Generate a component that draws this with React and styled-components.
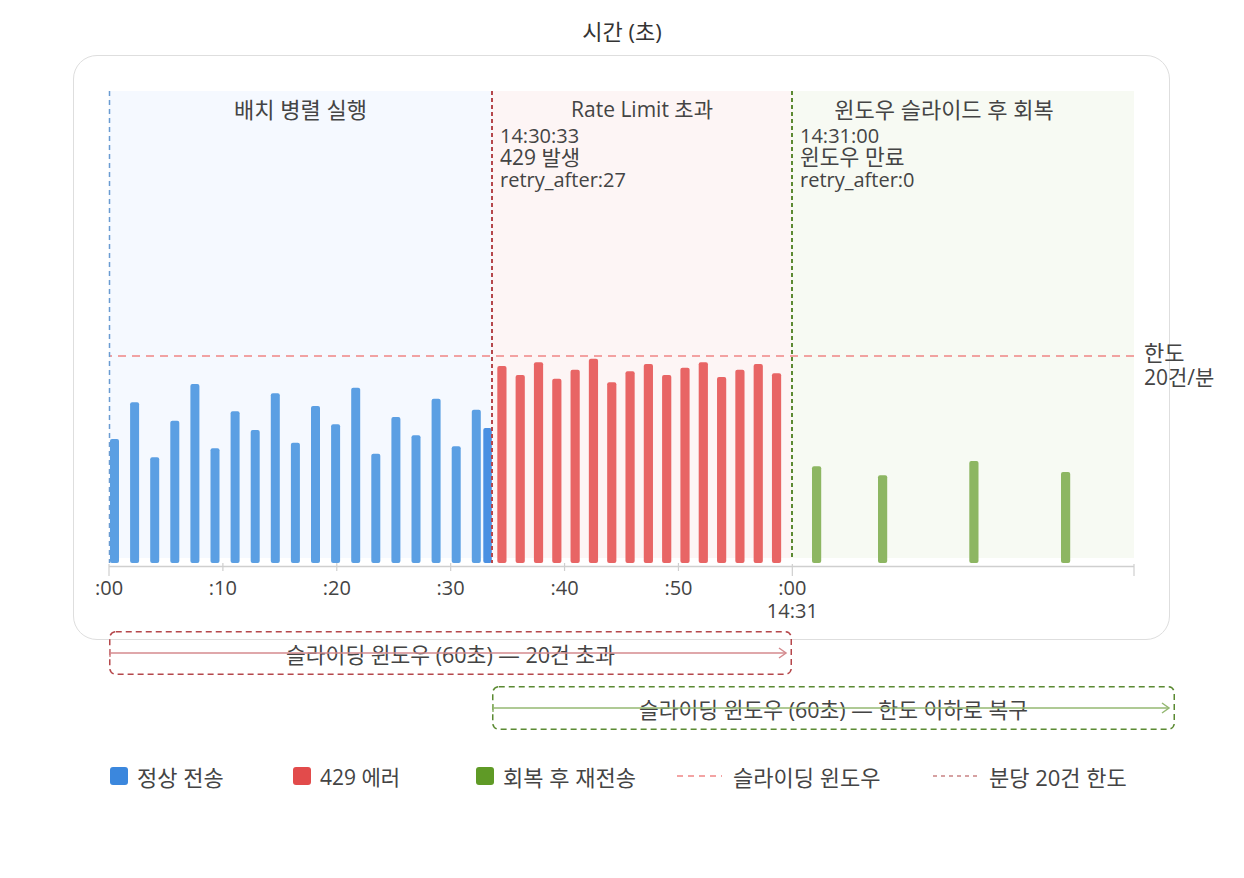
import React from 'react';
import styled, { createGlobalStyle } from 'styled-components';

const GlobalStyle = createGlobalStyle`
  body {
    margin: 0;
    background: #fff;
    font-family: "Open Sans", "Noto Sans CJK KR", sans-serif;
    color: #444;
  }
`

const Page = styled.div`
  width: 1244px;
  height: 878px;
  padding-top: 17px;
  box-sizing: border-box;
`

const Title = styled.div`
  text-align: center;
  font-size: 22px;
  line-height: 28px;
  color: #333;
  margin-bottom: 10px;
`

const Card = styled.div`
  margin-left: 73px;
  width: 1097px;
  height: 585px;
  box-sizing: border-box;
  border: 1px solid #dedede;
  border-radius: 24px;
  padding: 35px 0 0 16px;
  background: #fff;
`

const Chart = styled.svg`
  display: block;
  overflow: visible;
  font-family: "Open Sans", "Noto Sans CJK KR", sans-serif;
  font-size: 20px;
  fill: #444;
`

const WindowStack = styled.div`
  margin-top: -9px;
  display: flex;
  flex-direction: column;
  gap: 11px;
`

const WindowBox = styled.div`
  position: relative;
  margin-left: ${props => props.left}px;
  width: 683px;
  height: 44px;
  display: flex;
  align-items: center;
  justify-content: center;
  font-size: 21.5px;
  color: #444;
`

const WindowArrow = styled.svg`
  position: absolute;
  left: 0;
  top: 0;
  overflow: visible;
`

const Legend = styled.div`
  margin-top: 33px;
  margin-left: 110px;
  display: flex;
  align-items: center;
  height: 26px;
`

const LegendItem = styled.div`
  display: flex;
  align-items: center;
  gap: ${props => props.gap || 9}px;
  width: ${props => props.width ? props.width + 'px' : 'auto'};
  font-size: ${props => props.size || 22}px;
  color: #444;
  white-space: nowrap;
`

const Swatch = styled.span`
  width: 18px;
  height: 18px;
  border-radius: 3px;
  background: ${props => props.color};
`

// chart geometry, in page pixels
const X0 = 109
const SEC = 1025 / 90
const BASE = 563

const blueTops = [439, 402.3, 457.3, 420.7, 384, 448.3, 411.3, 430, 393.3, 442.7, 406, 424.3, 387.7, 453.7, 417, 435.3, 398.7, 446.3, 409.7]
const redTops = [366, 375, 362.3, 378.7, 369.7, 358.7, 382.3, 371.3, 364, 375, 367.7, 362.3, 377, 369.7, 364, 373.3]
const greenBars = [{ x: 812, t: 466.3 }, { x: 878, t: 475.3 }, { x: 969.3, t: 461 }, { x: 1061, t: 472 }]
const ticks = [
  { s: 0, label: ':00', major: true },
  { s: 10, label: ':10' },
  { s: 20, label: ':20' },
  { s: 30, label: ':30' },
  { s: 40, label: ':40' },
  { s: 50, label: ':50' },
  { s: 60, label: ':00', sub: '14:31', major: true },
  { s: 90, major: true },
]

function RateChart() {
  return <Chart width="1140" height="545" viewBox="90 91 1140 545">
    <rect x="109" y="91" width="383" height="467" fill="#f5f9ff" />
    <rect x="492" y="91" width="300" height="467" fill="#fdf5f5" />
    <rect x="792" y="91" width="342" height="467" fill="#f7faf3" />

    <line x1="1134" y1="356" x2="109" y2="356" stroke="#f08585" strokeWidth="1.5" strokeDasharray="8 6" />

    {blueTops.map((t, i) =>
      <rect key={'b' + i} x={110 + i * 20.1} y={t} width="9" height={BASE - t} rx="2" fill="#5b9fe3" />
    )}
    <rect x="483.3" y="428" width="8.5" height={BASE - 428} rx="2" fill="#4a90e2" />
    {redTops.map((t, i) =>
      <rect key={'r' + i} x={497.3 + i * 18.31} y={t} width="9.2" height={BASE - t} rx="2" fill="#e86565" />
    )}
    {greenBars.map((b, i) =>
      <rect key={'g' + i} x={b.x} y={b.t} width="9.2" height={BASE - b.t} rx="2" fill="#8db662" />
    )}

    <line x1="109.5" y1="91" x2="109.5" y2="563" stroke="#6a9bd1" strokeWidth="1.5" strokeDasharray="5 4" />
    <line x1="492" y1="91" x2="492" y2="563" stroke="#b5474b" strokeWidth="2" strokeDasharray="4 3" />
    <line x1="792" y1="91" x2="792" y2="560" stroke="#5b8a32" strokeWidth="2" strokeDasharray="4 3" />

    <line x1="109" y1="566.5" x2="1134" y2="566.5" stroke="#cfcfcf" strokeWidth="1.5" />
    {ticks.map(t => {
      const x = X0 + t.s * SEC
      return <g key={t.s}>
        <line x1={x} y1={t.major ? 564 : 563} x2={x} y2={t.major ? 576 : 571} stroke="#cfcfcf" strokeWidth="1.2" />
        {t.label && <text x={x} y="595" textAnchor="middle">{t.label}</text>}
        {t.sub && <text x={x} y="618" textAnchor="middle">{t.sub}</text>}
      </g>
    })}

    <text x="300.5" y="118" textAnchor="middle" fontSize="22">배치 병렬 실행</text>
    <text x="642" y="117" textAnchor="middle" fontSize="21">Rate Limit 초과</text>
    <text x="944" y="118" textAnchor="middle" fontSize="22">윈도우 슬라이드 후 회복</text>

    <text x="500" y="143">14:30:33</text>
    <text x="500" y="165" fontSize="21">429 발생</text>
    <text x="500" y="187">retry_after:27</text>

    <text x="800" y="143">14:31:00</text>
    <text x="800" y="165" fontSize="21.5">윈도우 만료</text>
    <text x="800" y="187">retry_after:0</text>

    <text x="1144" y="361" fontSize="22">한도</text>
    <text x="1144" y="385" fontSize="21">20건/분</text>
  </Chart>
}

function SlidingWindow(props) {
  return <WindowBox left={props.left}>
    {props.children}
    <WindowArrow width="683" height="44">
      <rect x="0.75" y="0.75" width="681.5" height="42.5" rx="6" fill="none" stroke={props.border} strokeWidth="1.5" strokeDasharray="6 4" />
      <line x1="1" y1="18" x2="1" y2="26" stroke={props.line} strokeWidth="1.5" />
      <line x1="1" y1="22" x2="677" y2="22" stroke={props.line} strokeWidth="1.5" />
      <polyline points="670,17 677,22 670,27" fill="none" stroke={props.line} strokeWidth="1.5" />
    </WindowArrow>
  </WindowBox>
}

export default function App() {
  return <Page>
    <GlobalStyle />
    <Title>시간 (초)</Title>
    <Card>
      <RateChart />
    </Card>
    <WindowStack>
      <SlidingWindow left={109} border="#b5474b" line="#d48a8e">
        슬라이딩 윈도우 (60초) — 20건 초과
      </SlidingWindow>
      <SlidingWindow left={492} border="#5b8a32" line="#94b872">
        슬라이딩 윈도우 (60초) — 한도 이하로 복구
      </SlidingWindow>
    </WindowStack>
    <Legend>
      <LegendItem width={183}><Swatch color="#3b87dd" />정상 전송</LegendItem>
      <LegendItem width={183} size={21}><Swatch color="#e24b4b" />429 에러</LegendItem>
      <LegendItem width={201}><Swatch color="#5f9a26" />회복 후 재전송</LegendItem>
      <LegendItem width={256} gap={11}>
        <svg width="45" height="4"><line x1="0" y1="2" x2="45" y2="2" stroke="#f08585" strokeWidth="1.5" strokeDasharray="6 5" /></svg>
        슬라이딩 윈도우
      </LegendItem>
      <LegendItem gap={11}>
        <svg width="45" height="4"><line x1="0" y1="2" x2="45" y2="2" stroke="#c98284" strokeWidth="1.5" strokeDasharray="4 4" /></svg>
        분당 20건 한도
      </LegendItem>
    </Legend>
  </Page>
}
